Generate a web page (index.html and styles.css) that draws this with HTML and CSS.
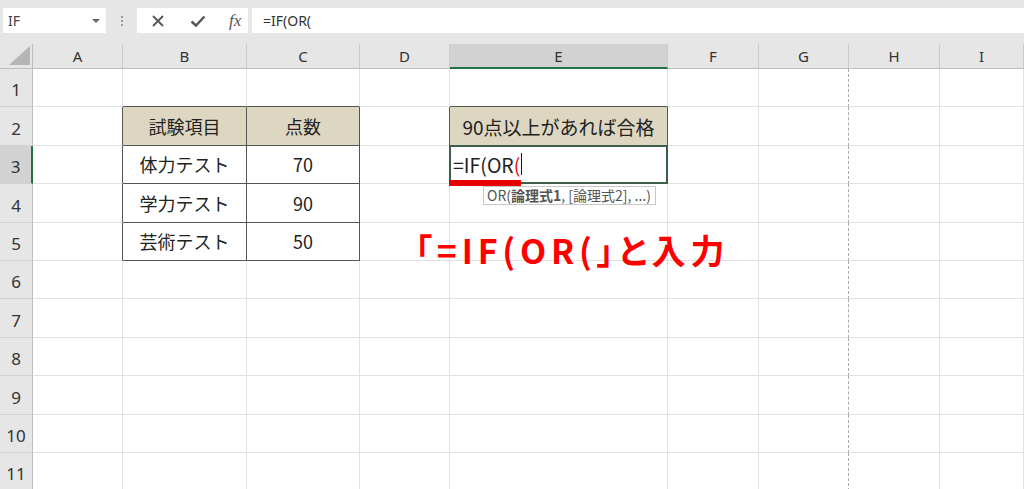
FILE: index.html
```html
<!DOCTYPE html>
<html lang="ja">
<head>
    <meta charset="UTF-8">
    <title>IF OR</title>
    <link rel="stylesheet" href="styles.css">
</head>
<body>

    <div class="toolbar">
        <div class="name-box">
            <span>IF</span>
            <span class="arrow"></span>
        </div>
        <div class="grip"><i></i><i></i><i></i></div>
        <div class="fx-buttons">
            <svg width="14" height="14" viewBox="0 0 14 14"><path d="M2 2 L12 12 M12 2 L2 12" stroke="#555" stroke-width="1.8"/></svg>
            <svg width="16" height="14" viewBox="0 0 16 14"><path d="M1.5 7.5 L6 11.5 L14.5 2.5" stroke="#555" stroke-width="2.4" fill="none"/></svg>
            <span class="fx">fx</span>
        </div>
        <div class="formula">=IF(OR(</div>
    </div>

    <div class="sheet">
        <!-- column headers -->
        <div class="corner"><span></span></div>
        <div class="ch">A</div>
        <div class="ch">B</div>
        <div class="ch">C</div>
        <div class="ch">D</div>
        <div class="ch sel">E</div>
        <div class="ch">F</div>
        <div class="ch">G</div>
        <div class="ch">H</div>
        <div class="ch">I</div>

        <!-- row 1 -->
        <div class="rh">1</div>
        <div class="c"></div>
        <div class="c eb"></div>
        <div class="c eb"></div>
        <div class="c"></div>
        <div class="c eb"></div>
        <div class="c"></div>
        <div class="c pb"></div>
        <div class="c"></div>
        <div class="c"></div>

        <!-- row 2 -->
        <div class="rh">2</div>
        <div class="c er"></div>
        <div class="c t hd">試験項目</div>
        <div class="c t hd">点数</div>
        <div class="c er"></div>
        <div class="c t hd wide">90点以上があれば合格</div>
        <div class="c"></div>
        <div class="c pb"></div>
        <div class="c"></div>
        <div class="c"></div>

        <!-- row 3 -->
        <div class="rh sel">3</div>
        <div class="c er"></div>
        <div class="c t">体力テスト</div>
        <div class="c t">70</div>
        <div class="c"></div>
        <div class="c active">
            <span class="typing">=IF(OR<b>(</b></span><span class="caret"></span>
            <span class="underline"></span>
            <div class="hint">OR(<b>論理式1</b>, [論理式2], ...)</div>
        </div>
        <div class="c"></div>
        <div class="c pb"></div>
        <div class="c"></div>
        <div class="c"></div>

        <!-- row 4 -->
        <div class="rh">4</div>
        <div class="c er"></div>
        <div class="c t">学力テスト</div>
        <div class="c t">90</div>
        <div class="c"></div>
        <div class="c"></div>
        <div class="c"></div>
        <div class="c pb"></div>
        <div class="c"></div>
        <div class="c"></div>

        <!-- row 5 -->
        <div class="rh">5</div>
        <div class="c er"></div>
        <div class="c t">芸術テスト</div>
        <div class="c t">50</div>
        <div class="c"></div>
        <div class="c"></div>
        <div class="c"></div>
        <div class="c pb"></div>
        <div class="c"></div>
        <div class="c"></div>

        <!-- rows 6 - 11 -->
        <div class="rh">6</div>
        <div class="c"></div><div class="c"></div><div class="c"></div><div class="c"></div><div class="c"></div><div class="c"></div><div class="c pb"></div><div class="c"></div><div class="c"></div>
        <div class="rh">7</div>
        <div class="c"></div><div class="c"></div><div class="c"></div><div class="c"></div><div class="c"></div><div class="c"></div><div class="c pb"></div><div class="c"></div><div class="c"></div>
        <div class="rh">8</div>
        <div class="c"></div><div class="c"></div><div class="c"></div><div class="c"></div><div class="c"></div><div class="c"></div><div class="c pb"></div><div class="c"></div><div class="c"></div>
        <div class="rh">9</div>
        <div class="c"></div><div class="c"></div><div class="c"></div><div class="c"></div><div class="c"></div><div class="c"></div><div class="c pb"></div><div class="c"></div><div class="c"></div>
        <div class="rh">10</div>
        <div class="c"></div><div class="c"></div><div class="c"></div><div class="c"></div><div class="c"></div><div class="c"></div><div class="c pb"></div><div class="c"></div><div class="c"></div>
        <div class="rh">11</div>
        <div class="c"></div><div class="c"></div><div class="c"></div><div class="c"></div><div class="c"></div><div class="c"></div><div class="c pb"></div><div class="c"></div><div class="c"></div>

        <div class="note">「=IF(OR(」と入力</div>
    </div>

</body>
</html>
```

FILE: styles.css
```css
body {
    margin: 0;
    padding: 0;
    background-color: #fff;
    font-family: 'Noto Sans', 'Noto Sans CJK JP', sans-serif;
    overflow: hidden;
    width: 1024px;
    height: 489px;
}

/* formula bar */
.toolbar {
    height: 44px;
    background-color: #e6e6e6;
    display: flex;
    align-items: flex-start;
    padding-top: 8px;
    box-sizing: border-box;
}

.name-box {
    margin-left: 3px;
    width: 103px;
    height: 25px;
    background-color: #fff;
    display: flex;
    align-items: center;
    justify-content: space-between;
    padding: 0 6px 0 5px;
    box-sizing: border-box;
    font-size: 14px;
    color: #444;
}

.arrow {
    width: 0;
    height: 0;
    border-left: 4px solid transparent;
    border-right: 4px solid transparent;
    border-top: 4px solid #666;
}

.grip {
    width: 31px;
    height: 25px;
    display: flex;
    flex-direction: column;
    align-items: center;
    justify-content: center;
    gap: 2px;
}

.grip i {
    width: 2px;
    height: 2px;
    background-color: #9a9a9a;
}

.fx-buttons {
    width: 111px;
    height: 25px;
    background-color: #fff;
    display: flex;
    align-items: center;
    padding-left: 14px;
    gap: 25px;
    box-sizing: border-box;
}

.fx {
    font-family: 'Liberation Serif', serif;
    font-style: italic;
    font-size: 17px;
    color: #555;
    margin-left: -2px;
}

.formula {
    margin-left: 4px;
    flex: 1;
    height: 25px;
    background-color: #fff;
    font-size: 14px;
    color: #333;
    display: flex;
    align-items: center;
    padding-left: 11px;
}

/* sheet grid */
.sheet {
    position: relative;
    display: grid;
    grid-template-columns: 33px 90px 124px 113px 90px 218px 91px 90px 91px 1fr;
    grid-template-rows: 25px repeat(11, 38.4px);
}

.corner {
    background-color: #e6e6e6;
    border-right: 1px solid #bdbdbd;
    border-bottom: 1px solid #bdbdbd;
    box-sizing: border-box;
    display: flex;
    align-items: flex-end;
    justify-content: flex-end;
    padding: 0 2px 3px 0;
}

.corner span {
    width: 0;
    height: 0;
    border-left: 21px solid transparent;
    border-bottom: 19px solid #b5b5b5;
}

.ch {
    background-color: #e6e6e6;
    border-right: 1px solid #cacaca;
    border-bottom: 1px solid #bdbdbd;
    box-sizing: border-box;
    display: flex;
    align-items: center;
    justify-content: center;
    font-size: 15px;
    color: #333;
}

.ch.sel {
    background-color: #d2d2d2;
    border-bottom: 2px solid #217346;
}

.rh {
    background-color: #e6e6e6;
    border-right: 1px solid #bdbdbd;
    border-bottom: 1px solid #d0d0d0;
    box-sizing: border-box;
    display: flex;
    align-items: flex-end;
    justify-content: center;
    padding-bottom: 5px;
    font-size: 17px;
    color: #333;
}

.rh.sel {
    background-color: #d2d2d2;
    border-right: 2px solid #217346;
}

.c {
    border-right: 1px solid #e1e1e1;
    border-bottom: 1px solid #e1e1e1;
    box-sizing: border-box;
    display: flex;
    align-items: center;
    justify-content: center;
    font-family: 'Noto Sans CJK JP', sans-serif;
    font-size: 18px;
    color: #222;
}

.c.pb {
    border-right: 1px dashed #aaa;
}

.c.er {
    border-right-color: #555;
}

.c.eb {
    border-bottom-color: #555;
}

.c.t {
    border-right-color: #555;
    border-bottom-color: #555;
}

.c.hd {
    background-color: #ddd7c1;
}

.c.wide {
    font-size: 19px;
}

/* cell being edited */
.c.active {
    position: relative;
    justify-content: flex-start;
    padding-left: 3px;
    font-size: 19.5px;
}

.c.active::after {
    content: '';
    position: absolute;
    left: -1px;
    top: -1px;
    right: -1px;
    bottom: -1px;
    border: 2px solid #3d5e48;
}

.typing b {
    font-weight: normal;
    color: #e01010;
}

.caret {
    width: 1px;
    height: 22px;
    background-color: #111;
    margin-left: 1px;
}

.underline {
    position: absolute;
    left: -1px;
    top: 34px;
    width: 72px;
    height: 6px;
    background-color: #e60000;
    z-index: 2;
}

.hint {
    position: absolute;
    left: 33px;
    top: 40px;
    width: 173px;
    height: 19px;
    box-sizing: border-box;
    background-color: #fff;
    border: 1px solid #c8c8c8;
    font-size: 14px;
    color: #555;
    white-space: nowrap;
    padding-left: 3px;
    line-height: 17px;
    z-index: 1;
}

.hint b {
    font-weight: bold;
}

/* annotation */
.note {
    position: absolute;
    left: 415px;
    top: 181px;
    font-family: 'Noto Sans CJK JP', sans-serif;
    font-feature-settings: 'palt';
    font-weight: bold;
    font-size: 34px;
    letter-spacing: 4.8px;
    color: #f00;
    white-space: nowrap;
}
```
